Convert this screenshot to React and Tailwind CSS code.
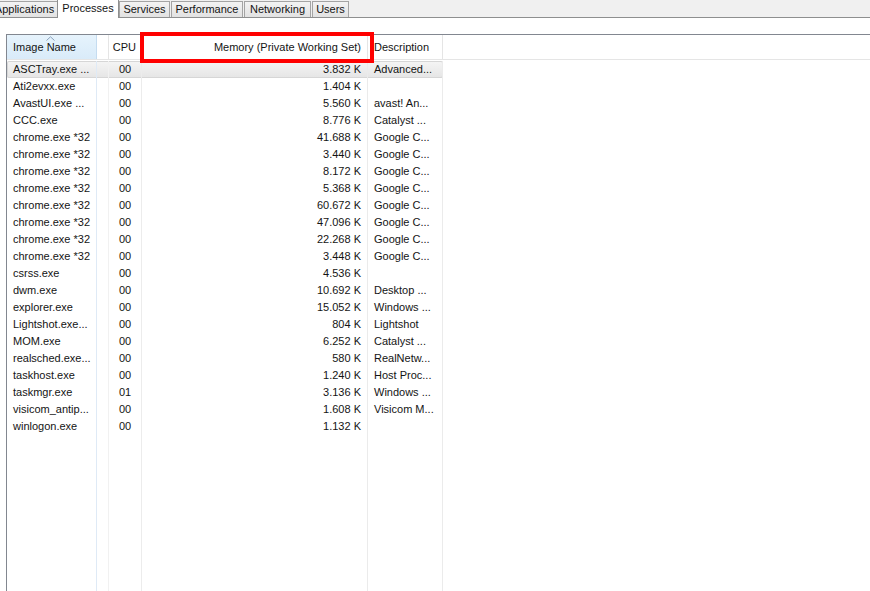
import React from "react";

const rows = [
  ["ASCTray.exe ...", "00", "3.832 K", "Advanced..."],
  ["Ati2evxx.exe", "00", "1.404 K", ""],
  ["AvastUI.exe ...", "00", "5.560 K", "avast! An..."],
  ["CCC.exe", "00", "8.776 K", "Catalyst ..."],
  ["chrome.exe *32", "00", "41.688 K", "Google C..."],
  ["chrome.exe *32", "00", "3.440 K", "Google C..."],
  ["chrome.exe *32", "00", "8.172 K", "Google C..."],
  ["chrome.exe *32", "00", "5.368 K", "Google C..."],
  ["chrome.exe *32", "00", "60.672 K", "Google C..."],
  ["chrome.exe *32", "00", "47.096 K", "Google C..."],
  ["chrome.exe *32", "00", "22.268 K", "Google C..."],
  ["chrome.exe *32", "00", "3.448 K", "Google C..."],
  ["csrss.exe", "00", "4.536 K", ""],
  ["dwm.exe", "00", "10.692 K", "Desktop ..."],
  ["explorer.exe", "00", "15.052 K", "Windows ..."],
  ["Lightshot.exe...", "00", "804 K", "Lightshot"],
  ["MOM.exe", "00", "6.252 K", "Catalyst ..."],
  ["realsched.exe...", "00", "580 K", "RealNetw..."],
  ["taskhost.exe", "00", "1.240 K", "Host Proc..."],
  ["taskmgr.exe", "01", "3.136 K", "Windows ..."],
  ["visicom_antip...", "00", "1.608 K", "Visicom M..."],
  ["winlogon.exe", "00", "1.132 K", ""],
];

const tabs = [
  ["Applications", "w-[67px]"],
  ["Processes", "w-[62px]"],
  ["Services", "w-[51px]"],
  ["Performance", "w-[72px]"],
  ["Networking", "w-[67px]"],
  ["Users", "w-[37px]"],
];

function Cells({ r }) {
  return (
    <>
      <div className="w-[90px] shrink-0 border-r border-[#dfeaf6] pl-[6px] whitespace-nowrap overflow-hidden">{r ? r[0] : ""}</div>
      <div className="w-[12px] shrink-0 border-r border-[#f1f1f1]"></div>
      <div className="w-[33px] shrink-0 border-r border-[#ececec] pl-[10px]">{r ? r[1] : ""}</div>
      <div className="w-[226px] shrink-0 border-r border-[#ebebeb] text-right pr-[6px]">{r ? r[2] : ""}</div>
      <div className="w-[75px] shrink-0 border-r border-[#ebebeb] pl-[6px] whitespace-nowrap overflow-hidden">{r ? r[3] : ""}</div>
      <div className="flex-1"></div>
    </>
  );
}

export default function App() {
  return (
    <div
      className="w-[870px] h-[591px] bg-white relative overflow-hidden flex flex-col text-[11px] text-[#141414]"
      style={{ fontFamily: '"Liberation Sans", Arial, sans-serif' }}
    >
      {/* Tab strip */}
      <div className="h-[18px] bg-[#f0f0f0] border-b border-[#8e8f8f] flex items-end shrink-0">
        <div className="flex items-end ml-[-10px]">
          {tabs.map(([t, w]) => {
            const sel = t === "Processes";
            return (
              <div
                key={t}
                className={
                  (sel
                    ? "h-[19px] mb-[-1px] bg-white border border-b-0 border-[#8e8f8f] leading-[16px] z-10 mx-[-1px] "
                    : "h-[16px] bg-gradient-to-b from-[#f3f3f3] to-[#e2e2e2] border border-b-0 border-[#a4a4a4] leading-[15px] ml-[1px] ") +
                  w +
                  " text-center shrink-0 whitespace-nowrap"
                }
              >
                {t}
              </div>
            );
          })}
        </div>
      </div>
      <div className="h-[16px] shrink-0"></div>

      {/* List */}
      <div className="flex-1 ml-[6px] border-l border-t border-[#828790] flex flex-col">
        {/* Header */}
        <div className="h-[25px] flex shrink-0 border-b border-[#e5e5e5] leading-[25px]">
          <div className="w-[90px] shrink-0 bg-gradient-to-b from-[#e6f3fc] to-[#d9ebf9] border-r border-[#c5dcf0] pl-[6px] relative">
            Image Name
            <svg className="absolute left-[39px] top-[1px]" width="9" height="5" viewBox="0 0 9 5">
              <path d="M0.5 4.5 L4.5 0.8 L8.5 4.5" fill="none" stroke="#8aa1bb" strokeWidth="1" />
            </svg>
          </div>
          <div className="w-[12px] shrink-0 border-r border-[#e5e5e5]"></div>
          <div className="w-[33px] shrink-0 border-r border-[#e5e5e5] text-right pr-[5px]">CPU</div>
          <div className="w-[226px] shrink-0 border-r border-[#e5e5e5] text-right pr-[6px]">Memory (Private Working Set)</div>
          <div className="w-[75px] shrink-0 border-r border-[#e5e5e5] pl-[6px]">Description</div>
          <div className="flex-1"></div>
        </div>
        {/* Rows */}
        <div className="flex-1 flex flex-col pt-[1px]">
          {rows.map((r, i) => (
            <div
              key={i}
              className={
                i === 0
                  ? "h-[17px] leading-[17px] flex w-[436px] bg-gradient-to-b from-[#f5f5f5] to-[#e5e5e5] ring-1 ring-inset ring-[#d6d6d6] rounded-[2px]"
                  : "h-[17px] leading-[17px] flex"
              }
            >
              <Cells r={r} />
            </div>
          ))}
          <div className="flex-1 flex">
            <Cells />
          </div>
        </div>
      </div>

      {/* Red annotation box */}
      <div className="absolute left-[140px] top-[32px] w-[234px] h-[31px] border-[4px] border-[#ff0000]"></div>
    </div>
  );
}
